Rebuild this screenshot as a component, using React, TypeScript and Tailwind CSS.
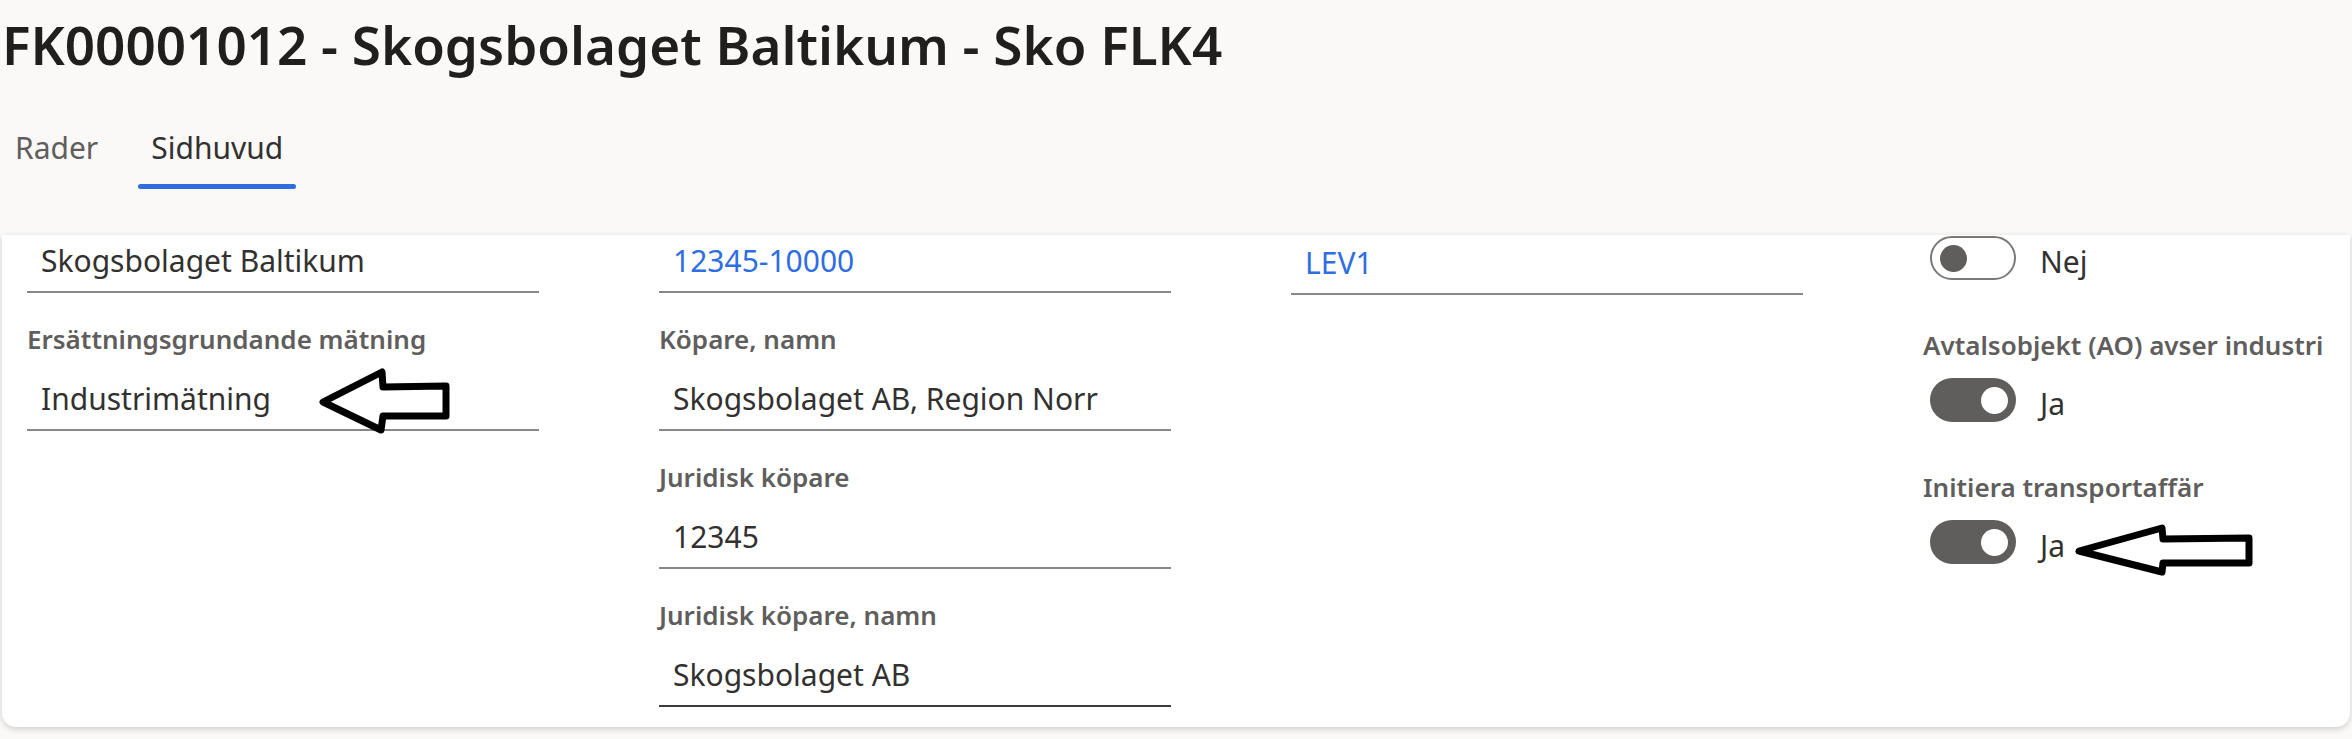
import type { ReactNode } from 'react'

const tabs = [
  { id: 'rader', label: 'Rader', active: false },
  { id: 'sidhuvud', label: 'Sidhuvud', active: true },
]

function Label({ children }: { children: ReactNode }) {
  return (
    <div className="mt-[30px] whitespace-nowrap text-[26px] font-semibold leading-[32px] text-[#605e5c]">
      {children}
    </div>
  )
}

interface ValueProps {
  children: ReactNode
  first?: boolean
  link?: boolean
  dark?: boolean
  extra?: ReactNode
}

function Value({ children, first, link, dark, extra }: ValueProps) {
  return (
    <div
      className={`relative border-b-2 pb-[10px] pl-[14px] text-[30px] leading-[40px] whitespace-nowrap ${
        first ? 'pt-[6px]' : 'mt-[20px] pt-[4px]'
      } ${dark ? 'border-[#3b3a39]' : 'border-[#8a8886]'} ${link ? 'text-[#2f6de1]' : 'text-[#323130]'}`}
    >
      {children}
      {extra}
    </div>
  )
}

function Toggle({ on }: { on: boolean }) {
  return (
    <div
      className={`ml-[7px] flex h-[44px] w-[86px] shrink-0 items-center rounded-full px-[8px] ${
        on ? 'justify-end bg-[#5f5e5c]' : 'justify-start border-2 border-[#7a7977] bg-white px-[6px]'
      }`}
    >
      <div className={`h-[27px] w-[27px] rounded-full ${on ? 'bg-white' : 'bg-[#5f5e5c]'}`} />
    </div>
  )
}

function ToggleRow({ on, extra }: { on: boolean; extra?: ReactNode }) {
  return (
    <div className="flex items-start">
      <Toggle on={on} />
      <span className="ml-[24px] mt-[4px] text-[30px] leading-[44px] text-[#323130]">{on ? 'Ja' : 'Nej'}</span>
      {extra}
    </div>
  )
}

// hand drawn annotation arrows
function ArrowSmall() {
  return (
    <svg width="132" height="66" viewBox="0 0 132 66" className="absolute left-[292px] top-[-7px]">
      <polygon
        points="4,34 63,4 64,19 127,18 127,48 64,48 62,62"
        fill="white"
        stroke="black"
        strokeWidth="7"
        strokeLinejoin="round"
      />
    </svg>
  )
}

function ArrowWide() {
  return (
    <svg width="178" height="52" viewBox="0 0 178 52" className="ml-[10px] mt-[4px] shrink-0">
      <polygon
        points="4,27 87,4 88,15 174,14 174,39 88,39 87,48"
        fill="white"
        stroke="black"
        strokeWidth="7"
        strokeLinejoin="round"
      />
    </svg>
  )
}

export default function App() {
  return (
    <div className="h-[739px] w-[2352px] overflow-hidden bg-[#faf9f8] font-['Noto_Sans',sans-serif]">
      <header className="h-[235px] px-[2px] pt-[17px]">
        <h1 className="whitespace-nowrap text-[53px] font-semibold leading-[55px] text-[#201f1e]">
          FK00001012 - Skogsbolaget Baltikum - Sko FLK4
        </h1>
        <nav className="mt-[56px] flex gap-[27px]">
          {tabs.map((tab) => (
            <div key={tab.id} className="flex flex-col">
              <span
                className={`px-[13px] text-[30px] leading-[40px] ${
                  tab.active ? 'text-[#323130]' : 'text-[#605e5c]'
                }`}
              >
                {tab.label}
              </span>
              <div className={`mt-[16px] h-[5px] rounded-full ${tab.active ? 'bg-[#2f6de1]' : 'bg-transparent'}`} />
            </div>
          ))}
        </nav>
      </header>

      <section className="mx-[2px] h-[492px] overflow-hidden rounded-b-[14px] bg-white shadow-[0_2px_6px_rgba(0,0,0,0.18)]">
        <div className="grid grid-cols-[512px_512px_512px_1fr] items-start gap-x-[120px] pl-[25px]">
          <div className="flex flex-col">
            <Value first>Skogsbolaget Baltikum</Value>
            <Label>Ersättningsgrundande mätning</Label>
            <Value extra={<ArrowSmall />}>Industrimätning</Value>
          </div>

          <div className="flex flex-col">
            <Value first link>
              12345-10000
            </Value>
            <Label>Köpare, namn</Label>
            <Value>Skogsbolaget AB, Region Norr</Value>
            <Label>Juridisk köpare</Label>
            <Value>12345</Value>
            <Label>Juridisk köpare, namn</Label>
            <Value dark>Skogsbolaget AB</Value>
          </div>

          <div className="mt-[2px] flex flex-col">
            <Value first link>
              LEV1
            </Value>
          </div>

          <div className="mt-[1px] flex flex-col">
            <ToggleRow on={false} />
            <div className="mt-[45px] whitespace-nowrap text-[26px] font-semibold leading-[32px] text-[#605e5c]">
              Avtalsobjekt (AO) avser industri
            </div>
            <div className="mt-[17px]">
              <ToggleRow on />
            </div>
            <div className="mt-[45px] whitespace-nowrap text-[26px] font-semibold leading-[32px] text-[#605e5c]">
              Initiera transportaffär
            </div>
            <div className="mt-[17px]">
              <ToggleRow on extra={<ArrowWide />} />
            </div>
          </div>
        </div>
      </section>
    </div>
  )
}
